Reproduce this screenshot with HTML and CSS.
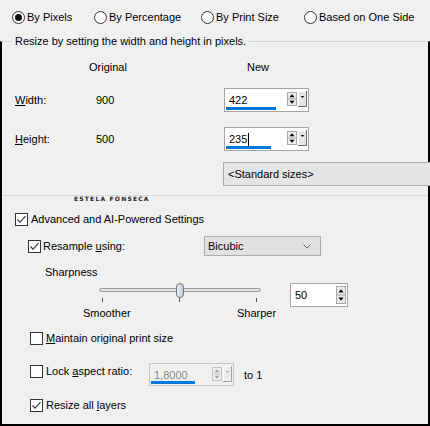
FILE: index.html
```html
<!DOCTYPE html>
<html>
<head>
<meta charset="utf-8">
<link rel="stylesheet" href="styles.css">
</head>
<body>
<div class="win">
  <div class="modes">
    <label class="radio r1"><span class="rb on"></span><span>By Pixels</span></label>
    <label class="radio r2"><span class="rb"></span><span>By Percentage</span></label>
    <label class="radio r3"><span class="rb"></span><span>By Print Size</span></label>
    <label class="radio r4"><span class="rb"></span><span>Based on One Side</span></label>
  </div>

  <fieldset class="group">
    <legend>Resize by setting the width and height in pixels.</legend>

    <div class="dim-row head">
      <span class="c1"></span>
      <span class="c2"><span class="h-orig">Original</span></span>
      <span class="c3"><span class="h-new">New</span></span>
    </div>

    <div class="dim-row w">
      <span class="c1"><u>W</u>idth:</span>
      <span class="c2">900</span>
      <div class="spin">
        <span class="val">422</span>
        <span class="bar" style="width:50px"></span>
        <span class="ctl">
          <svg class="ud" width="10" height="14" viewBox="0 0 10 14"><rect x="0.5" y="0.5" width="9" height="13" fill="#ececec" stroke="#a8a8a8"/><line x1="0.5" y1="7" x2="9.5" y2="7" stroke="#a8a8a8"/><path d="M5 2.2 L7.6 5.2 H2.4Z" fill="#000"/><path d="M2.4 8.8 H7.6 L5 11.8Z" fill="#000"/></svg>
          <svg class="dd" width="9" height="16" viewBox="0 0 9 16"><rect x="0" y="0" width="9" height="16" fill="#e6e6e6"/><path d="M0.5 15.5 V0.5 H8.5" stroke="#fff" fill="none"/><path d="M8.5 0 V15.5 H0" stroke="#6a6a6a" fill="none"/><path d="M2.8 5 H6.2 L4.5 7Z" fill="#000"/></svg>
        </span>
      </div>
    </div>

    <div class="dim-row h">
      <span class="c1"><u>H</u>eight:</span>
      <span class="c2">500</span>
      <div class="spin">
        <span class="val">235<span class="caret"></span></span>
        <span class="bar" style="width:45px"></span>
        <span class="ctl">
          <svg class="ud" width="10" height="14" viewBox="0 0 10 14"><rect x="0.5" y="0.5" width="9" height="13" fill="#ececec" stroke="#a8a8a8"/><line x1="0.5" y1="7" x2="9.5" y2="7" stroke="#a8a8a8"/><path d="M5 2.2 L7.6 5.2 H2.4Z" fill="#000"/><path d="M2.4 8.8 H7.6 L5 11.8Z" fill="#000"/></svg>
          <svg class="dd" width="9" height="16" viewBox="0 0 9 16"><rect x="0" y="0" width="9" height="16" fill="#e6e6e6"/><path d="M0.5 15.5 V0.5 H8.5" stroke="#fff" fill="none"/><path d="M8.5 0 V15.5 H0" stroke="#6a6a6a" fill="none"/><path d="M2.8 5 H6.2 L4.5 7Z" fill="#000"/></svg>
        </span>
      </div>
    </div>

    <div class="std">&lt;Standard sizes&gt;</div>

    <div class="sep"></div>
    <div class="mark">ESTELA FONSECA</div>

    <div class="row adv">
      <span class="cb"><svg width="11" height="11" viewBox="0 0 11 11"><polyline points="1.5,5.5 4,8.2 9.5,2.2" fill="none" stroke="#3a3a3a" stroke-width="1.2"/></svg></span>
      <span>Advanced and AI-Powered Settings</span>
    </div>

    <div class="row resample">
      <span class="lbl-group">
        <span class="cb"><svg width="11" height="11" viewBox="0 0 11 11"><polyline points="1.5,5.5 4,8.2 9.5,2.2" fill="none" stroke="#3a3a3a" stroke-width="1.2"/></svg></span>
        <span>Resample <u>u</u>sing:</span>
      </span>
      <div class="combo">
        <span>Bicubic</span>
        <svg class="chev" width="8" height="5" viewBox="0 0 8 5"><polyline points="0.5,0.5 4,4 7.5,0.5" fill="none" stroke="#606060" stroke-width="1"/></svg>
      </div>
    </div>

    <div class="row sharp">Sharpness</div>

    <div class="row slider-row">
      <div class="slider">
        <span class="track"></span>
        <span class="tick t1"></span>
        <span class="tick t2"></span>
        <span class="tick t3"></span>
        <span class="thumb"></span>
      </div>
      <div class="spin small">
        <span class="val">50</span>
        <span class="ctl">
          <svg class="ud" width="10" height="18" viewBox="0 0 10 18"><rect x="0.5" y="0.5" width="9" height="17" fill="#ececec" stroke="#a8a8a8"/><line x1="0.5" y1="9" x2="9.5" y2="9" stroke="#a8a8a8"/><path d="M5 3.2 L7.6 6.4 H2.4Z" fill="#000"/><path d="M2.4 11.6 H7.6 L5 14.8Z" fill="#000"/></svg>
        </span>
      </div>
    </div>

    <div class="row ticks-lbl">
      <span class="smooth">Smoother</span>
      <span>Sharper</span>
    </div>

    <div class="row maintain">
      <span class="cb"></span>
      <span><u>M</u>aintain original print size</span>
    </div>

    <div class="row lock">
      <span class="lbl-group">
        <span class="cb"></span>
        <span>Lock <u>a</u>spect ratio:</span>
      </span>
      <div class="spin dis">
        <span class="val">1,8000</span>
        <span class="bar" style="width:44px"></span>
        <span class="ctl">
          <svg class="ud" width="10" height="14" viewBox="0 0 10 14"><rect x="0.5" y="0.5" width="9" height="13" fill="#efefef" stroke="#c4c4c4"/><line x1="0.5" y1="7" x2="9.5" y2="7" stroke="#c4c4c4"/><path d="M5 2.2 L7.6 5.2 H2.4Z" fill="#a0a0a0"/><path d="M2.4 8.8 H7.6 L5 11.8Z" fill="#a0a0a0"/></svg>
          <svg class="dd" width="9" height="16" viewBox="0 0 9 16"><rect x="0" y="0" width="9" height="16" fill="#ececec"/><path d="M0.5 15.5 V0.5 H8.5" stroke="#fff" fill="none"/><path d="M8.5 0 V15.5 H0" stroke="#a0a0a0" fill="none"/><path d="M2.8 5 H6.2 L4.5 7Z" fill="#a0a0a0"/></svg>
        </span>
      </div>
      <span class="to">to 1</span>
    </div>

    <div class="row resize">
      <span class="cb"><svg width="11" height="11" viewBox="0 0 11 11"><polyline points="1.5,5.5 4,8.2 9.5,2.2" fill="none" stroke="#3a3a3a" stroke-width="1.2"/></svg></span>
      <span>Resize all <u>l</u>ayers</span>
    </div>
  </fieldset>
</div>
</body>
</html>
```

FILE: styles.css
```css
html, body {
  margin: 0;
  padding: 0;
}
body {
  width: 430px;
  height: 426px;
  overflow: hidden;
  background: #f0f0f0;
  font-family: "Liberation Sans", Arial, sans-serif;
  font-size: 11px;
  color: #000;
}
u { text-decoration: underline; text-underline-offset: 1px; }

.win {
  height: 426px;
  display: flex;
  flex-direction: column;
}

/* radio row */
.modes {
  height: 34px;
  flex: none;
  display: flex;
  align-items: center;
  padding-left: 12px;
}
.radio {
  display: flex;
  align-items: center;
  gap: 2px;
}
.r1 { width: 82px; }
.r2 { width: 107px; }
.r3 { width: 103px; }
.rb {
  width: 13px;
  height: 13px;
  box-sizing: border-box;
  border: 1px solid #333;
  border-radius: 50%;
  background: #fff;
  display: flex;
  align-items: center;
  justify-content: center;
  flex: none;
}
.rb.on::after {
  content: "";
  width: 7px;
  height: 7px;
  border-radius: 50%;
  background: #111;
}

/* group box */
.group {
  flex: 1;
  margin: 0;
  padding: 0;
  min-width: 0;
  border: 2px solid #000;
  border-top: 1px solid #d4d4d4;
  display: flex;
  flex-direction: column;
}
.group legend {
  margin-left: 10px;
  padding: 0 3px;
  line-height: 14px;
  font-size: 11px;
}

.dim-row {
  display: flex;
  align-items: center;
  padding-left: 13px;
}
.dim-row.head { height: 18px; margin-top: 10px; }
.dim-row.w { height: 24px; margin-top: 12px; }
.dim-row.h { height: 24px; margin-top: 15px; }
.c1 { width: 81px; flex: none; }
.c2 { width: 128px; flex: none; }
.h-orig { margin-left: -7px; }
.h-new { margin-left: 23px; }

/* spin box */
.spin {
  position: relative;
  width: 85px;
  height: 24px;
  box-sizing: border-box;
  border: 1px solid #a5a5a5;
  background: #fff;
  display: flex;
  align-items: center;
  padding-left: 4px;
  flex: none;
}
.spin .val { display: flex; align-items: center; }
.caret {
  display: inline-block;
  width: 1px;
  height: 13px;
  background: #000;
  margin-left: 1px;
}
.spin .bar {
  position: absolute;
  left: 1px;
  bottom: 1px;
  height: 3px;
  background: #0078d7;
}
.spin .ctl {
  margin-left: auto;
  margin-right: 1px;
  align-self: flex-start;
  margin-top: 2px;
  display: flex;
  gap: 1px;
}
.spin .ctl svg { display: block; }
.spin .ctl .ud { margin-top: 1px; }

.spin.small {
  width: 58px;
  margin-left: 28px;
}
.spin.small .ctl { align-self: center; margin-top: 0; }
.spin.small .ctl .ud { margin-top: 0; }

.spin.dis {
  height: 23px;
  border-color: #c6c6c6;
  background: #f0f0f0;
  color: #8a8a8a;
}
.spin.dis .ctl { margin-top: 2px; }

/* standard sizes */
.std {
  margin: 11px -2px 0 221px;
  height: 24px;
  box-sizing: border-box;
  border: 1px solid #adadad;
  border-right: none;
  background: #e5e5e5;
  display: flex;
  align-items: center;
  padding-left: 4px;
  position: relative;
}

.sep {
  margin-top: 9px;
  border-top: 1px solid #d9d9d9;
}
.mark {
  margin-left: 72px;
  height: 8px;
  line-height: 5px;
  font-family: "DejaVu Sans", sans-serif;
  font-weight: bold;
  font-size: 6px;
  letter-spacing: 1.2px;
  color: #222;
}

/* generic rows */
.row {
  display: flex;
  align-items: center;
  height: 14px;
}
.cb {
  width: 13px;
  height: 13px;
  box-sizing: border-box;
  border: 1px solid #333;
  background: #fff;
  margin-right: 3px;
  flex: none;
  display: flex;
  align-items: center;
  justify-content: center;
}
.cb svg { display: block; }

.adv { margin-top: 8px; padding-left: 13px; }

.resample { margin-top: 10px; height: 20px; padding-left: 26px; }
.resample .cb { margin-right: 2px; }
.lbl-group { display: flex; align-items: center; flex: none; }
.resample .lbl-group { width: 176px; }
.combo {
  width: 117px;
  height: 20px;
  box-sizing: border-box;
  border: 1px solid #adadad;
  background: #e1e1e1;
  display: flex;
  align-items: center;
  padding: 0 9px 0 3px;
  justify-content: space-between;
}
.chev { display: block; }

.sharp { margin-top: 9px; padding-left: 43px; }

.slider-row { margin-top: 4px; height: 24px; padding-left: 97px; }
.slider {
  position: relative;
  width: 163px;
  height: 24px;
  flex: none;
}
.track {
  position: absolute;
  left: 0;
  top: 5px;
  width: 162px;
  height: 4px;
  box-sizing: border-box;
  border: 1px solid #9d9d9d;
  border-radius: 3px;
  background: #e4e4e4;
}
.tick {
  position: absolute;
  top: 15px;
  width: 1px;
  height: 4px;
  background: #555;
}
.t1 { left: 3px; }
.t2 { left: 80px; }
.t3 { left: 157px; }
.thumb {
  position: absolute;
  left: 77px;
  top: 0;
  width: 8px;
  height: 15px;
  box-sizing: border-box;
  border: 1px solid #777;
  border-radius: 4px;
  background: linear-gradient(90deg, #eef0f6, #c4c8d6);
}

.ticks-lbl { height: 13px; line-height: 13px; padding-left: 81px; }
.smooth { width: 154px; flex: none; }

.maintain { margin-top: 11px; padding-left: 28px; }

.lock {
  margin-top: 18px;
  height: 24px;
  padding-left: 28px;
  align-items: flex-start;
}
.lock .lbl-group { width: 119px; height: 14px; margin-top: 1px; }
.lock .spin { align-self: flex-start; }
.to { margin-left: 10px; align-self: center; }

.resize { margin-top: 11px; padding-left: 28px; }
```
